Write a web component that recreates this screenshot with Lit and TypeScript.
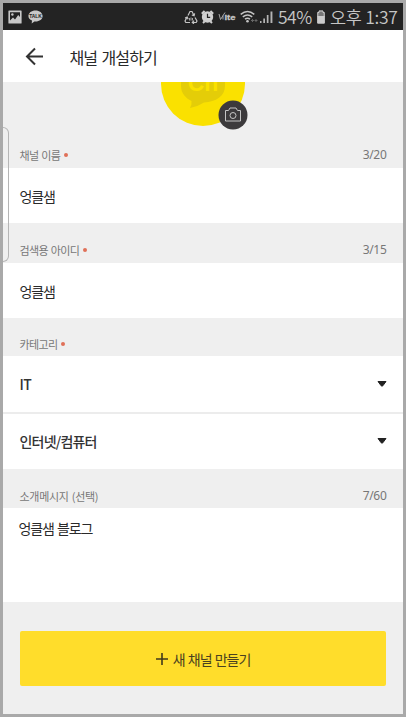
import { LitElement, html, css, nothing } from "lit";
import { customElement } from "lit/decorators.js";

const FONT = css`"Noto Sans CJK KR", "Noto Sans", sans-serif`;

@customElement("status-bar")
class StatusBar extends LitElement {
  static styles = css`
    :host { display: flex; align-items: center; height: 27px; box-sizing: border-box; padding: 0 5px 0 5px; background: #232323; color: #c6c6c6; font-family: ${FONT}; }
    svg { display: block; flex: none; }
    .picture { margin-right: 6px; }
    .spacer { flex: 1; }
    .recycle { margin-right: 3px; }
    .alarm { margin-right: 4px; }
    .lte { margin-right: 4px; }
    .wifi { margin-right: 2px; }
    .signal { margin-right: 5px; }
    .pct, .time { font-size: 17.500px; line-height: 26px; white-space: nowrap; font-weight: 350; padding-top: 1px; }
    .pct { width: 34px; letter-spacing: -0.500px; }
    .battery { margin: 0 4px 0 4px; }
    .time { width: 68px; letter-spacing: -0.300px; }
  `;
  render() {
    return html`
      <svg class="picture" width="14" height="14" viewBox="0 0 14 14">
        <path fill="#c8c8c8" fill-rule="evenodd" d="M1 .5h12q.6 0 .6.6v11.8q0 .6-.6.6H1q-.6 0-.6-.6V1.1Q.4.5 1 .5zM2 2.3v8.2l3-3 2 2 3.2-4.5L12 7V2.3z"/>
        <circle cx="4.4" cy="4.5" r="1.2" fill="#c8c8c8"/>
      </svg>
      <svg width="15" height="14" viewBox="0 0 15 14">
        <path fill="#c8c8c8" d="M7.5.4c4 0 7.1 2.4 7.1 5.6s-3.1 5.5-7.1 5.5l-1.1-.1-2.7 2.2.3-3C1.800 9.600.4 8 .4 6 .4 2.800 3.500.4 7.500.4z"/>
        <text x="7.500" y="7.900" text-anchor="middle" font-size="4.900" font-weight="700" font-family="Liberation Sans, sans-serif" fill="#222">TALK</text>
      </svg>
      <span class="spacer"></span>
      <svg class="recycle" width="14" height="14" viewBox="0 0 14 14" fill="none" stroke="#c4c4c4" stroke-width="1.200">
        <path d="M4 5.500 6 1.500h2l2 4M10.600 3.300l-.5 2.500-2.300-.8M11 7.500l2 3.500-.8 1.500H8.500M10 10.700l-1.700 1.800 1.700 1.300M6 12.500H1.800L1 11l2-3.800M1 8l2.200-.9.900 2.200"/>
        <path d="M5.500 8v2.500M7 7.500v3M8.500 8v2.500" stroke-width=".8"/>
      </svg>
      <svg class="alarm" width="13" height="14" viewBox="0 0 13 14">
        <circle cx="6.500" cy="7" r="5.700" fill="#d0d0d0"/>
        <path d="M.8 3.800 3.600 1M12.200 3.800 9.400 1M2 13l1.700-1.700M11 13l-1.700-1.700" stroke="#d0d0d0" stroke-width="2"/>
        <path d="M6.500 3.800V7.300H9.200" fill="none" stroke="#232323" stroke-width="1.200"/>
      </svg>
      <svg class="lte" width="18" height="12" viewBox="0 0 18 12" fill="#c8c8c8" font-family="Liberation Sans, sans-serif">
        <path d="M1 3 2.500 8.500 7 1.500M5 4.500v4" fill="none" stroke="#a8a8a8" stroke-width="1"/>
        <text x="6.500" y="9" font-size="8" font-weight="700" textLength="11" lengthAdjust="spacingAndGlyphs" stroke="#c8c8c8" stroke-width=".3">lte</text>
      </svg>
      <svg class="wifi" width="18" height="14" viewBox="0 0 18 14" fill="none" stroke="#c4c4c4" stroke-width="1.500">
        <path d="M.7 4.300Q7.500-1.200 14.300 4.300M2.800 6.800q4.700-3.800 9.400 0M5 9.200q2.500-2 5 0"/>
        <circle cx="7.500" cy="11.300" r="1.300" fill="#c4c4c4" stroke="none"/>
        <path d="M11 10.500h3M12.500 9v3M14.500 10.500h3M16 9v3" stroke="#666" stroke-width="1"/>
      </svg>
      <svg class="signal" width="13" height="14" viewBox="0 0 13 14" fill="#b4b4b4">
        <path d="M0 11h1.500v2H0zM3.300 8.500H5V13H3.300zM6.800 5h1.700v8H6.800zM10.500 1.500h1.900V13h-1.900z"/>
      </svg>
      <span class="pct">54%</span>
      <svg class="battery" width="10" height="14" viewBox="0 0 10 14">
        <path fill="#777" d="M3 .5h4v1.500h1.700v5H1.300V2H3z"/><path fill="#ccc" d="M1.300 6h7.400v7.500H1.300z"/>
        <path fill="none" stroke="#ccc" d="M3 1h4v1.500h1.200V13H1.800V2.500H3z"/>
      </svg>
      <span class="time">오후 1:37</span>
    `;
  }
}

@customElement("section-label")
class SectionLabel extends LitElement {
  static properties = { text: {}, count: {}, required: { type: Boolean } };
  declare text: string;
  declare count: string;
  declare required: boolean;
  static styles = css`
    :host { display: flex; align-items: center; box-sizing: border-box; padding: 0 16.500px; color: #777; font-family: ${FONT}; font-size: 11px; line-height: 16px; letter-spacing: -0.650px; word-spacing: 1px; }
    .dot { width: 4px; height: 4px; border-radius: 50%; background: #e07058; margin-left: 4px; }
    .count { margin-left: auto; font-family: "Noto Sans", sans-serif; font-size: 12px; letter-spacing: -0.300px; }
  `;
  render() {
    return html`<span>${this.text}</span>${this.required ? html`<i class="dot"></i>` : nothing}
      ${this.count ? html`<span class="count">${this.count}</span>` : nothing}`;
  }
}

@customElement("app-root")
class AppRoot extends LitElement {
  static styles = css`
    :host { display: flex; flex-direction: column; position: relative; box-sizing: border-box; width: 406px; height: 717px; border: 3px solid #a9a9a9; background: #efefef; font-family: ${FONT}; color: #2a2a2a; overflow: hidden; }
    :host > * { flex: none; }
    svg { display: block; flex: none; }
    header { display: flex; align-items: center; height: 52px; padding-left: 22px; background: #fff; }
    h1 { margin: 0 0 0 24.500px; font-size: 16px; line-height: 24px; font-weight: 400; letter-spacing: -0.850px; word-spacing: 1.500px; padding-top: 2px; }
    .profile { height: 53px; display: flex; justify-content: center; }
    .profile svg { margin-left: 0; }
    .name { height: 33px; padding-top: 7px; }
    .id { height: 40px; padding-top: 14px; }
    .category { height: 38px; padding-top: 14px; }
    .intro { height: 39px; padding-top: 14px; letter-spacing: -0.300px; }
    .field { display: flex; align-items: center; justify-content: space-between; box-sizing: border-box; padding: 0 16px 0 16.500px; background: #fff; font-size: 14px; line-height: 20px; letter-spacing: -1.100px; height: 55px; }
    .select { height: 56px; font-weight: 500; color: #333; letter-spacing: -0.500px; }
    .select + .select { border-top: 2px solid #ececec; height: 57px; padding-bottom: 1px; letter-spacing: -0.800px; }
    .message { height: 94px; align-items: flex-start; padding: 10px 15.500px; letter-spacing: -1.100px; word-spacing: 1px; }
    .create { display: flex; align-items: center; justify-content: center; height: 55px; margin: 29px 17px 0; padding: 0; border: 0; border-radius: 2px; background: #ffdd2b; color: #4a4120; font-family: inherit; font-size: 14px; letter-spacing: -1.050px; word-spacing: 1.200px; gap: 5px; }
    .handle { position: absolute; left: -1px; top: 124px; width: 7px; height: 135px; box-sizing: border-box; border: 1px solid #b5b5b5; border-left: 0; border-radius: 0 6px 6px 0; }
  `;
  private arrow() {
    return html`<svg width="10" height="6" viewBox="0 0 10 6"><path d="M1 .5h8L5.800 4.800q-.8.8-1.600 0z" fill="#222" stroke="#222" stroke-linejoin="round"/></svg>`;
  }
  render() {
    return html`
      <status-bar></status-bar>
      <header>
        <svg width="20" height="20" viewBox="0 0 20 20" fill="none" stroke="#333" stroke-width="2"><path d="M18 10.500H2M10 2.500l-8 8 8 8"/></svg>
        <h1>채널 개설하기</h1>
      </header>
      <div class="profile">
        <svg width="92" height="53" viewBox="157 82 92 53">
          <circle cx="203" cy="84" r="42" fill="#fae100"/>
          <path d="M181 82h44v4c0 10-9 16-21 16.500q-6 4-14 5.500 2-3 1.500-7c-6-3-10.500-8-10.500-15z" fill="#e4cd08"/>
          <text x="203" y="91" text-anchor="middle" font-family="Liberation Sans, sans-serif" font-weight="700" font-size="23" fill="#fae100">Ch</text>
          <circle cx="233" cy="115" r="14.500" fill="#3c3a3c"/>
          <g fill="none" stroke="#c4c4c4"><path d="M225.500 110.500h3l1.500-2.500h6l1.500 2.500h3v10.500h-15z"/><circle cx="233" cy="115.500" r="3"/></g>
        </svg>
      </div>
      <section-label class="name" text="채널 이름" count="3/20" required></section-label>
      <div class="field">엉클샘</div>
      <section-label class="id" text="검색용 아이디" count="3/15" required></section-label>
      <div class="field">엉클샘</div>
      <section-label class="category" text="카테고리" required></section-label>
      <div class="field select">IT${this.arrow()}</div>
      <div class="field select">인터넷/컴퓨터${this.arrow()}</div>
      <section-label class="intro" text="소개메시지 (선택)" count="7/60"></section-label>
      <div class="field message">엉클샘 블로그</div>
      <button class="create">
        <svg width="12" height="12" viewBox="0 0 12 12"><path d="M6 0v12M0 6h12" stroke="#40391c" stroke-width="1.600"/></svg>
        <span>새 채널 만들기</span>
      </button>
      <div class="handle"></div>
    `;
  }
}
